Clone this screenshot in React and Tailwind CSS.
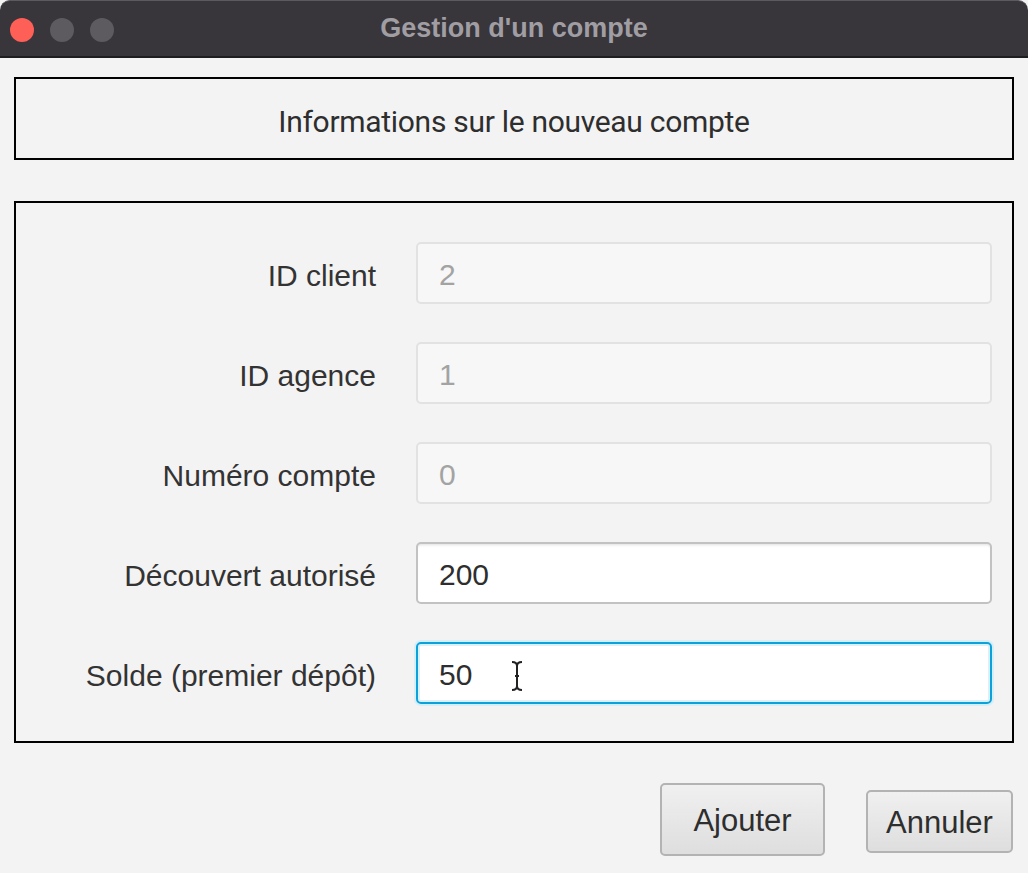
import React from 'react';

const FIELDS = [
  { label: 'ID client', value: '2', state: 'disabled' },
  { label: 'ID agence', value: '1', state: 'disabled' },
  { label: 'Numéro compte', value: '0', state: 'disabled' },
  { label: 'Découvert autorisé', value: '200', state: 'normal' },
  { label: 'Solde (premier dépôt)', value: '50', state: 'focused' },
];

const fieldClass = {
  disabled: 'bg-[#f7f7f7] border-[#e2e2e2] text-[#a3a3a3]',
  normal: 'bg-white border-[#c2c2c2] text-[#2e2e2e] shadow-[inset_0_3px_3px_-2px_rgba(0,0,0,0.12)]',
  focused: 'bg-white border-[#0aa2da] text-[#2e2e2e] shadow-[0_0_0_2px_#d6eef8,inset_0_0_0_2px_#dbf0f8]',
};

const Field = ({ label, value, state }) => (
  <div className="flex items-center h-[62px]">
    <div className="w-[360px] text-right text-[30px] text-[#333] pt-[4px]">{label}</div>
    <div
      className={`ml-[40px] w-[576px] h-[62px] rounded-[5px] border-2 flex items-center pl-[21px] pt-[3px] text-[30px] relative ${fieldClass[state]}`}
    >
      {value}
      {state === 'focused' && (
        <svg className="absolute left-[92px] top-[17px]" width="14" height="30" viewBox="0 0 14 30">
          <path d="M2 1 Q7 1 7 5 Q7 1 12 1 M7 5 V25 M5 15 H9 M2 29 Q7 29 7 25 Q7 29 12 29" stroke="#222" strokeWidth="2" fill="none" />
        </svg>
      )}
    </div>
  </div>
);

export default function App() {
  return (
    <div className="w-[1028px] h-[873px] bg-[#f3f3f3] overflow-hidden" style={{ fontFamily: '"Liberation Sans", Arial, sans-serif' }}>
      {/* barre de titre */}
      <div className="h-[58px] bg-[#38353b] rounded-t-[10px] border-t border-[#5c5a5f] border-b-2 border-b-[#1e1d20] relative flex items-center justify-center">
        <div className="absolute left-[10px] top-[17px] flex gap-[16px]">
          <div className="w-[24px] h-[24px] rounded-full bg-[#fe5f57]"></div>
          <div className="w-[24px] h-[24px] rounded-full bg-[#5d5b60]"></div>
          <div className="w-[24px] h-[24px] rounded-full bg-[#5d5b60]"></div>
        </div>
        <span className="text-[27px] font-bold text-[#a09ea3]">Gestion d'un compte</span>
      </div>

      <div className="px-[14px] pt-[19px]">
        <div className="h-[83px] border-2 border-black flex items-center justify-center pt-[6px]">
          <span className="text-[30px] text-[#2e2e2e] tracking-[-0.3px]" style={{ fontFamily: 'Roboto, sans-serif' }}>
            Informations sur le nouveau compte
          </span>
        </div>

        <div className="mt-[41px] h-[542px] border-2 border-black pt-[39px] flex flex-col gap-[38px]">
          {FIELDS.map(f => (
            <Field key={f.label} {...f} />
          ))}
        </div>

        <div className="flex justify-end items-center gap-[41px] mt-[40px] pr-[1px]">
          <button className="w-[165px] h-[73px] rounded-[5px] border-2 border-[#b3b3b3] bg-gradient-to-b from-[#f0f0f0] to-[#dedede] text-[31px] text-[#2e2e2e] pt-[3px]">
            Ajouter
          </button>
          <button className="w-[147px] h-[63px] rounded-[5px] border-2 border-[#b3b3b3] bg-gradient-to-b from-[#f0f0f0] to-[#dedede] text-[31px] text-[#2e2e2e] mt-[4px] pt-[3px]">
            Annuler
          </button>
        </div>
      </div>
    </div>
  );
}
